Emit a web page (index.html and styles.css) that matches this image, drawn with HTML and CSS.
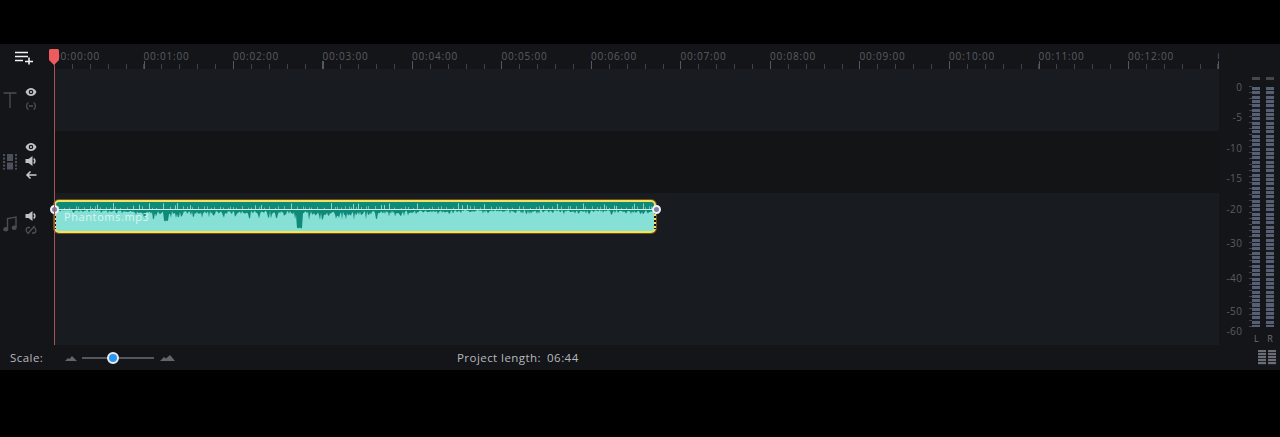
FILE: index.html
```html
<!DOCTYPE html>
<html lang="en">
<head>
  <meta charset="UTF-8">
  <title>Timeline</title>
  <link rel="stylesheet" href="styles.css">
</head>
<body>
  <div class="app">
    <div class="workspace">
      <div class="main">
        <!-- Ruler -->
        <div class="ruler">
          <div class="head">
            <svg class="add-track" width="20" height="14" viewBox="0 0 20 14">
              <path d="M1 1.500h13M1 5.500h13M1 9.500h8M11 10.500h8M15 6.500v7" stroke="#f1f2f4" stroke-width="1.600" fill="none"/>
            </svg>
          </div>
          <div class="ruler-scale">
            <span class="tick-label">00:00:00</span>
            <span class="tick-label">00:01:00</span>
            <span class="tick-label">00:02:00</span>
            <span class="tick-label">00:03:00</span>
            <span class="tick-label">00:04:00</span>
            <span class="tick-label">00:05:00</span>
            <span class="tick-label">00:06:00</span>
            <span class="tick-label">00:07:00</span>
            <span class="tick-label">00:08:00</span>
            <span class="tick-label">00:09:00</span>
            <span class="tick-label">00:10:00</span>
            <span class="tick-label">00:11:00</span>
            <span class="tick-label">00:12:00</span>
            <span class="tick-label">00:13:00</span>
          </div>
        </div>

        <!-- Title track -->
        <div class="track track-title">
          <div class="head">
            <svg class="track-icon" width="14" height="16" viewBox="0 0 14 16">
              <path d="M0.500 1h13M7 1v15" stroke="#4a4d53" stroke-width="1.300" fill="none"/>
            </svg>
            <div class="controls">
              <svg class="ctl" width="12" height="10" viewBox="0 0 12 10"><use href="#eye"/></svg>
              <svg class="ctl" width="12" height="10" viewBox="0 0 12 10"><use href="#link"/></svg>
            </div>
          </div>
          <div class="lane"></div>
        </div>

        <!-- Video track -->
        <div class="track track-video">
          <div class="head">
            <svg class="track-icon" width="14" height="17" viewBox="0 0 14 17">
              <path d="M4 1h6v7H4zM4 9.500h6v7H4z" fill="#4b505c"/>
              <path d="M1 1v15.500M13 1v15.500" stroke="#4b505c" stroke-width="2" stroke-dasharray="2 1.500" fill="none"/>
            </svg>
            <div class="controls">
              <svg class="ctl" width="12" height="10" viewBox="0 0 12 10"><use href="#eye"/></svg>
              <svg class="ctl" width="12" height="10" viewBox="0 0 12 10"><use href="#speaker"/></svg>
              <svg class="ctl" width="12" height="10" viewBox="0 0 12 10">
                <path d="M11.500 5H2M5.500 1.500L2 5l3.500 3.500" stroke="#c9cbcf" stroke-width="1.500" fill="none"/>
              </svg>
            </div>
          </div>
          <div class="lane"></div>
        </div>

        <!-- Audio track -->
        <div class="track track-audio">
          <div class="head">
            <svg class="track-icon" width="14" height="16" viewBox="0 0 14 16">
              <path d="M4.500 13V2.500L13 1v10.500" stroke="#4a4d53" stroke-width="1.400" fill="none"/>
              <ellipse cx="2.800" cy="13.200" rx="2.500" ry="2.200" fill="#4a4d53"/>
              <ellipse cx="11.200" cy="11.700" rx="2.500" ry="2.200" fill="#4a4d53"/>
            </svg>
            <div class="controls">
              <svg class="ctl" width="12" height="10" viewBox="0 0 12 10"><use href="#speaker"/></svg>
              <svg class="ctl" width="12" height="10" viewBox="0 0 12 10"><use href="#link-broken"/></svg>
            </div>
          </div>
          <div class="lane">
            <div class="clip">
              <svg id="wave" class="wave" width="598" height="29" viewBox="0 0 598 29"></svg>
              <span class="clip-name">Phantoms.mp3</span>
              <span class="notch notch-left"></span>
              <span class="notch notch-right"></span>
              <span class="handle handle-left"></span>
              <span class="handle handle-right"></span>
            </div>
          </div>
        </div>

        <div class="playhead">
          <svg width="10" height="16" viewBox="0 0 10 16">
            <path d="M1.500 0h7A1.500 1.500 0 0 1 10 1.500V11l-5 5-5-5V1.500A1.500 1.500 0 0 1 1.500 0z" fill="#ee5b5c"/>
          </svg>
          <div class="playhead-line"></div>
        </div>
      </div>

      <!-- Level meter -->
      <div class="meters">
        <div class="meter-scale">
          <span class="db" style="top: 36px">0</span>
          <span class="db" style="top: 66px">-5</span>
          <span class="db" style="top: 97px">-10</span>
          <span class="db" style="top: 127px">-15</span>
          <span class="db" style="top: 158px">-20</span>
          <span class="db" style="top: 192px">-30</span>
          <span class="db" style="top: 227px">-40</span>
          <span class="db" style="top: 260px">-50</span>
          <span class="db" style="top: 280px">-60</span>
          <div class="minor-ticks"></div>
        </div>
        <div class="channel">
          <span class="peak"></span>
          <span class="bar"></span>
          <span class="channel-name">L</span>
        </div>
        <div class="channel">
          <span class="peak"></span>
          <span class="bar"></span>
          <span class="channel-name">R</span>
        </div>
      </div>
    </div>

    <!-- Bottom bar -->
    <div class="statusbar">
      <span class="scale-label">Scale:</span>
      <svg class="mountain" width="12" height="6" viewBox="0 0 12 6"><path d="M0 6l3-3 1.500 1L7 1l5 5z" fill="#62656b"/></svg>
      <div class="slider"><span class="thumb"></span></div>
      <svg class="mountain" width="15" height="6" viewBox="0 0 15 6"><path d="M0 6l4-4 2 1.500L10 0l5 6z" fill="#62656b"/></svg>
      <div class="project-length"><span>Project length:</span><span>06:44</span></div>
      <div class="meter-toggle"></div>
    </div>
  </div>

  <!-- Shared icons -->
  <svg class="icon-defs" width="0" height="0">
    <defs>
      <g id="eye">
        <path d="M0.500 5C2 2 4 1 6 1s4 1 5.500 4C10 8 8 9 6 9S2 8 0.500 5z" fill="#c0c2c7"/>
        <circle cx="6" cy="5" r="2.300" fill="#16181c"/>
        <circle cx="6" cy="5" r="1.100" fill="#c0c2c7"/>
      </g>
      <g id="speaker">
        <path d="M0.500 3h3L7.500 0v10l-4-3h-3z" fill="#c0c2c7"/>
        <path d="M8.800 2.500c1.300 1.500 1.300 3.500 0 5" stroke="#c0c2c7" stroke-width="1.500" fill="none"/>
      </g>
      <g id="link">
        <path d="M3.500 1.500C1 2.500 1 7.500 3.500 8.500M8.500 1.500C11 2.500 11 7.500 8.500 8.500M4 5h4" stroke="#4d5056" stroke-width="1.300" fill="none"/>
      </g>
      <g id="link-broken">
        <path d="M5 2.500H3C0.500 3 0.500 7 3 8M7 8h2c2.500-.5 2.500-4.500 0-5.500M2.500 9L9.500 1" stroke="#4d5056" stroke-width="1.300" fill="none"/>
      </g>
    </defs>
  </svg>

  <script src="waveform.js"></script>
</body>
</html>
```

FILE: styles.css
```css
* {
  margin: 0;
  padding: 0;
  box-sizing: border-box;
}

body {
  background-color: #000;
  font-family: "Open Sans", Arial, sans-serif;
  overflow: hidden;
}

.app {
  margin-top: 44px;
  height: 326px;
  display: flex;
  flex-direction: column;
  background-color: #141518;
}

.workspace {
  display: flex;
  height: 301px;
}

.main {
  position: relative;
  width: 1219px;
  display: flex;
  flex-direction: column;
}

.head {
  width: 54px;
  flex-shrink: 0;
  display: flex;
  background-color: #141518;
}

/* Ruler */
.ruler {
  display: flex;
  height: 25px;
}

.add-track {
  margin: 7px 0 0 14px;
}

.ruler-scale {
  flex: 1;
  display: flex;
  overflow: hidden;
  background-image:
    repeating-linear-gradient(90deg, #55585e 0, #55585e 1px, transparent 1px, transparent 89.500px),
    repeating-linear-gradient(90deg, #3e4146 0, #3e4146 1px, transparent 1px, transparent 17.900px);
  background-size: 100% 8px, 100% 5px;
  background-position: 0 bottom, 0 bottom;
  background-repeat: no-repeat;
}

.tick-label {
  flex: 0 0 89.500px;
  font-size: 10px;
  line-height: 14px;
  padding-top: 5px;
  letter-spacing: 0.800px;
  color: #5a5d63;
}

/* Tracks */
.track {
  display: flex;
}

.track-title,
.track-video {
  height: 62px;
}

.track-audio {
  height: 152px;
}

.lane {
  flex: 1;
  background-color: #181b20;
}

.track-video .lane {
  background-color: #131416;
}

.track-audio .lane {
  padding-top: 7px;
}

.track-title .track-icon {
  margin: 23px 0 0 3px;
}

.track-video .track-icon {
  margin: 22px 0 0 3px;
}

.track-audio .track-icon {
  margin: 23px 0 0 3px;
}

.controls {
  display: flex;
  flex-direction: column;
  margin-left: 8px;
  gap: 4px;
}

.track-title .controls {
  padding-top: 18px;
}

.track-video .controls {
  padding-top: 11px;
}

.track-audio .controls {
  padding-top: 18px;
}

.ctl {
  display: block;
}

/* Clip */
.clip {
  position: relative;
  width: 602px;
  height: 33px;
  border: 2px solid #f2e35b;
  border-radius: 5px;
  box-shadow: 0 0 0 1px rgba(170, 120, 20, 0.6);
  background-color: #86e0d6;
}

.wave {
  display: block;
  border-radius: 3px;
}

.clip-name {
  position: absolute;
  left: 8px;
  top: 7px;
  font-size: 11px;
  line-height: 16px;
  letter-spacing: 0.600px;
  color: #d8f5f1;
}

.notch {
  position: absolute;
  top: 10px;
  width: 2px;
  height: 17px;
  background-image: repeating-linear-gradient(#15171a 0, #15171a 2px, transparent 2px, transparent 4px);
}

.notch-left {
  left: -2px;
}

.notch-right {
  right: -2px;
}

.handle {
  position: absolute;
  top: 3px;
  width: 9px;
  height: 9px;
  border: 2px solid #f1f2f6;
  border-radius: 50%;
  background-color: #7b80ad;
}

.handle-left {
  left: -6.500px;
}

.handle-right {
  right: -6.500px;
}

/* Playhead */
.playhead {
  position: absolute;
  left: 49px;
  top: 5px;
  width: 10px;
  height: 296px;
  display: flex;
  flex-direction: column;
  align-items: center;
}

.playhead svg {
  display: block;
  flex-shrink: 0;
}

.playhead-line {
  width: 1px;
  flex: 1;
  background-color: #a85355;
}

/* Level meter */
.meters {
  width: 61px;
  display: flex;
  background-color: #141518;
}

.meter-scale {
  position: relative;
  width: 34px;
}

.db {
  position: absolute;
  right: 10px;
  font-size: 10px;
  line-height: 14px;
  letter-spacing: 0.400px;
  color: #5a5d63;
}

.minor-ticks {
  position: absolute;
  right: 0;
  top: 42px;
  width: 3px;
  height: 246px;
  background-image: repeating-linear-gradient(#3e4146 0, #3e4146 1px, transparent 1px, transparent 6px);
}

.channel {
  width: 8px;
  margin-right: 6px;
  display: flex;
  flex-direction: column;
}

.peak {
  margin-top: 33px;
  height: 3px;
  background-color: #44474e;
}

.bar {
  margin-top: 7px;
  height: 244px;
  background-image: repeating-linear-gradient(#565f73 0, #565f73 3px, #1a1c22 3px, #1a1c22 4.330px);
}

.channel-name {
  margin-top: 6px;
  font-size: 9px;
  line-height: 12px;
  text-align: center;
  color: #6d7076;
}

/* Bottom bar */
.statusbar {
  display: flex;
  align-items: center;
  height: 25px;
  padding-left: 10px;
  font-size: 11.500px;
  color: #b7b9bd;
  background-color: #141518;
}

.scale-label {
  width: 55px;
  letter-spacing: 0.450px;
}

.mountain {
  display: block;
}

.slider {
  position: relative;
  width: 72px;
  height: 2px;
  margin: 0 6px 0 5px;
  background-color: #54575d;
}

.thumb {
  position: absolute;
  left: 25px;
  top: -5px;
  width: 12px;
  height: 12px;
  border: 2px solid #e9edf2;
  border-radius: 50%;
  background-color: #2c95f0;
}

.project-length {
  display: flex;
  gap: 6px;
  margin-left: 282px;
  letter-spacing: 0.450px;
}

.meter-toggle {
  margin-left: auto;
  margin-right: 4px;
  width: 18px;
  height: 15px;
  background-image:
    repeating-linear-gradient(90deg, transparent 0, transparent 8px, #141518 8px, #141518 10px),
    repeating-linear-gradient(#6a6e76 0, #6a6e76 2px, #22242a 2px, #22242a 3px);
}

.icon-defs {
  position: absolute;
}
```

FILE: waveform.js
```js
// Draws the audio clip's waveform: dark band on top, spikes down over the light body
var svg = document.getElementById("wave");
var lineY = 7;
var seed = 7;

function rand() {
  seed = (seed * 16807) % 2147483647;
  return seed / 2147483647;
}

// Rough depth of the waveform along the clip, [x, depth]
var shape = [
  [0, 2], [60, 3], [90, 7], [150, 6],
  [238, 7], [290, 9], [330, 6], [400, 3], [598, 4]
];

// The two deep dips, [from, to, depth]
var dips = [[108, 112, 14], [241, 246, 20]];

function depthAt(x) {
  for (var i = 1; i < shape.length; i++) {
    if (x <= shape[i][0]) {
      var a = shape[i - 1], b = shape[i];
      return a[1] + (b[1] - a[1]) * (x - a[0]) / (b[0] - a[0]);
    }
  }
  return 3;
}

function dipAt(x) {
  for (var i = 0; i < dips.length; i++) {
    if (x >= dips[i][0] && x <= dips[i][1]) return dips[i][2];
  }
  return 0;
}

var dark = "M0 0H598V" + lineY;
for (var x = 598; x >= 0; x--) {
  var r = rand();
  // mostly shallow, every so often a thin spike down
  var amount = r > 0.8 ? 1 + rand() * 0.5 : 0.3 + r * 0.7;
  var depth = Math.max(depthAt(x) * amount, dipAt(x) - rand() * 3);
  dark += "L" + x + " " + (lineY + depth).toFixed(1);
}
dark += "Z";

// Light peaks rising above the centre line
var low = "", high = "";
for (var p = 2; p < 598; p += 2 + Math.floor(rand() * 6)) {
  if (rand() > 0.8) {
    high += "M" + p + ".5 " + lineY + "v-" + (3 + rand() * 3).toFixed(1);
  } else {
    low += "M" + p + ".5 " + lineY + "v-" + (1 + rand() * 2).toFixed(1);
  }
}

svg.innerHTML =
  '<path d="' + dark + '" fill="#0f8a78"/>' +
  '<path d="' + low + '" stroke="#6cc0b0" stroke-width="1" fill="none"/>' +
  '<path d="' + high + '" stroke="#93d2c6" stroke-width="1" fill="none"/>' +
  '<rect x="0" y="' + lineY + '" width="598" height="1" fill="#d5eee8"/>';
```
